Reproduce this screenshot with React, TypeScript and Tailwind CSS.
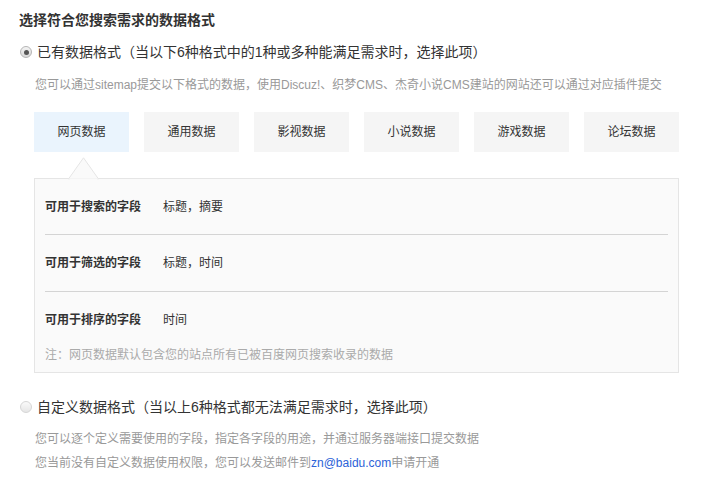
import React from 'react';

const tabs = ['网页数据', '通用数据', '影视数据', '小说数据', '游戏数据', '论坛数据'];

const fields = [
  { label: '可用于搜索的字段', value: '标题，摘要', row: 'h-[56px] border-b border-[#d4d4d4]' },
  { label: '可用于筛选的字段', value: '标题，时间', row: 'h-[57px] border-b border-[#d4d4d4]' },
  { label: '可用于排序的字段', value: '时间', row: 'h-[56px]' },
];

const Radio: React.FC<{ checked?: boolean }> = ({ checked = false }) => (
  <span
    className={`flex items-center justify-center w-[12px] h-[12px] rounded-full border ${
      checked ? 'border-[#b5b5b5] bg-gradient-to-b from-[#f4f4f4] to-[#d8d8d8]' : 'border-[#d6d6d6] bg-gradient-to-b from-[#fafafa] to-[#e6e6e6]'
    }`}
  >
    {checked && <span className="w-[5px] h-[5px] rounded-full bg-[#555]" />}
  </span>
);

export default function App() {
  return (
    <div
      className="w-[727px] h-[481px] bg-white px-[19px] pt-[11px] text-[#333]"
      style={{ fontFamily: '"Liberation Sans", "Noto Sans CJK SC", sans-serif' }}
    >
      <h2 className="text-[14px] leading-[18px] font-bold text-[#333]">选择符合您搜索需求的数据格式</h2>

      <label className="mt-[13px] flex items-center gap-[5px] pl-[1px] text-[14px] leading-[20px]">
        <Radio checked />
        <span>已有数据格式（当以下6种格式中的1种或多种能满足需求时，选择此项）</span>
      </label>
      <p className="mt-[15px] pl-[16px] text-[12px] leading-[16px] text-[#999]">
        您可以通过sitemap提交以下格式的数据，使用Discuz!、织梦CMS、杰奇小说CMS建站的网站还可以通过对应插件提交
      </p>

      <div className="ml-[15px] w-[645px]">
        <div className="mt-[19px] flex gap-[15px]">
          {tabs.map((t, i) => (
            <div
              key={t}
              className={`flex h-[40px] w-[95px] items-center justify-center text-[12px] ${
                i === 0 ? 'bg-[#eaf4fd]' : 'bg-[#f5f5f5]'
              }`}
            >
              {t}
            </div>
          ))}
        </div>

        <div className="relative mt-[26px] border border-[#e5e5e5] bg-[#fafafa] px-[10px]">
          {/* pointer under the active tab */}
          <svg className="absolute left-[33px] top-[-22px]" width="31" height="23" viewBox="0 0 31 23">
            <polygon points="0.5,22 15.5,0.8 30.5,22" fill="#fafafa" stroke="#e5e5e5" strokeWidth="1" />
            <rect x="1.5" y="21.5" width="28" height="2" fill="#fafafa" />
          </svg>
          {fields.map((f) => (
            <div key={f.label} className={`flex items-center text-[12px] ${f.row}`}>
              <span className="w-[118px] font-bold text-[#333]">{f.label}</span>
              <span className="text-[#333]">{f.value}</span>
            </div>
          ))}
          <p className="pb-[10px] text-[12px] leading-[14px] text-[#aaa]">注：网页数据默认包含您的站点所有已被百度网页搜索收录的数据</p>
        </div>
      </div>

      <label className="mt-[24px] flex items-center gap-[5px] pl-[1px] text-[14px] leading-[20px]">
        <Radio />
        <span>自定义数据格式（当以上6种格式都无法满足需求时，选择此项）</span>
      </label>
      <div className="mt-[10px] pl-[16px] text-[12px] leading-[24px] text-[#999]">
        <p>您可以逐个定义需要使用的字段，指定各字段的用途，并通过服务器端接口提交数据</p>
        <p>
          您当前没有自定义数据使用权限，您可以发送邮件到<a className="text-[#2b62d8]">zn@baidu.com</a>申请开通
        </p>
      </div>
    </div>
  );
}
